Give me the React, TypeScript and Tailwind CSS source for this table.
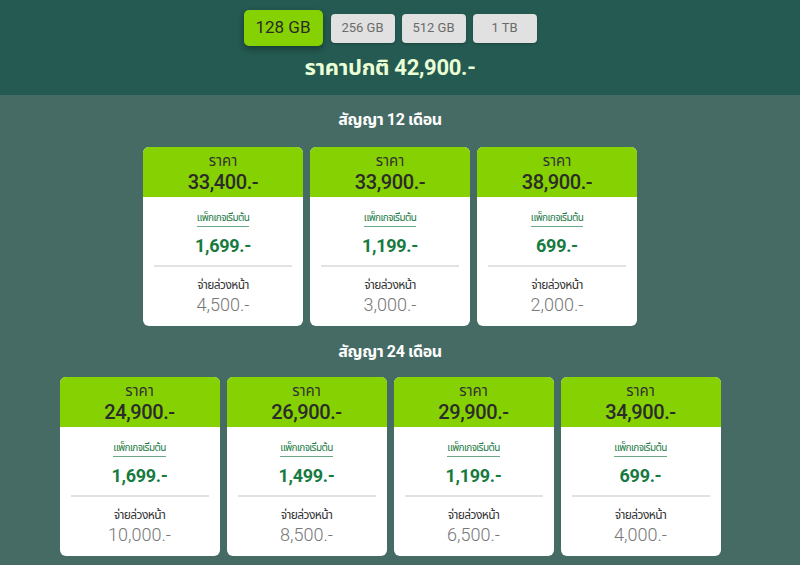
import React from 'react';

const font = { fontFamily: 'Roboto, "Noto Sans", "Noto Sans Thai", sans-serif' };

interface Plan {
  price: string;
  pack: string;
  down: string;
}

const plans12: Plan[] = [
  { price: '33,400.-', pack: '1,699.-', down: '4,500.-' },
  { price: '33,900.-', pack: '1,199.-', down: '3,000.-' },
  { price: '38,900.-', pack: '699.-', down: '2,000.-' },
];

const plans24: Plan[] = [
  { price: '24,900.-', pack: '1,699.-', down: '10,000.-' },
  { price: '26,900.-', pack: '1,499.-', down: '8,500.-' },
  { price: '29,900.-', pack: '1,199.-', down: '6,500.-' },
  { price: '34,900.-', pack: '699.-', down: '4,000.-' },
];

function PlanCard({ plan }: { plan: Plan }) {
  return (
    <div className="w-[160px] h-[179px] rounded-[6px] overflow-hidden bg-white flex flex-col">
      {/* Header */}
      <div className="h-[50px] bg-[#86d102] flex flex-col items-center pt-[6px]">
        <span className="text-[15px] leading-[17px] text-[#333]">ราคา</span>
        <span className="text-[20px] leading-[24px] font-medium tracking-[-0.4px] text-[#2b2b2b]">{plan.price}</span>
      </div>
      {/* Body */}
      <div className="flex-1 flex flex-col items-center pt-[14px]">
        <span className="text-[10px] leading-[14px] tracking-[-0.6px] text-[#1d7a45] border-b border-[#6aa886] pb-[1px]">
          แพ็กเกจเริ่มต้น
        </span>
        <span className="mt-[7px] text-[18px] leading-[24px] font-bold tracking-[-0.3px] text-[#177a3f]">{plan.pack}</span>
        <div className="mt-[7px] w-[138px] h-[2px] bg-[#e2e2e2]" />
        <span className="mt-[10px] text-[12px] leading-[17px] tracking-[-0.6px] text-[#333]">จ่ายล่วงหน้า</span>
        <span className="text-[18px] leading-[22px] font-light text-[#777]">{plan.down}</span>
      </div>
    </div>
  );
}

export default function App() {
  const sizes = ['256 GB', '512 GB', '1 TB'];

  return (
    <div className="w-[800px] h-[565px] overflow-hidden bg-[#466b64]" style={font}>
      {/* Top band */}
      <div className="h-[95px] bg-[#245a51]">
        <div className="w-[780px] flex flex-col items-center pt-[10px]">
          <div className="flex items-center">
            <button className="w-[79px] h-[36px] rounded-[5px] bg-[#86d102] text-[17px] text-[#2a2a2a] shadow-[0_3px_6px_rgba(0,0,0,0.35)]">
              128 GB
            </button>
            <div className="flex gap-[7px] ml-[8px]">
              {sizes.map((s) => (
                <button
                  key={s}
                  className="w-[64px] h-[29px] rounded-[4px] bg-[#e1e1e1] text-[13px] text-[#6b6b6b] shadow-[0_1px_2px_rgba(0,0,0,0.25)]"
                >
                  {s}
                </button>
              ))}
            </div>
          </div>
          <div className="mt-[8px] text-[22px] leading-[28px] font-bold tracking-[-0.3px] text-[#eaffd6]">ราคาปกติ 42,900.-</div>
        </div>
      </div>

      {/* Plans */}
      <div className="w-[780px] flex flex-col items-center">
        <div className="mt-[14px] text-[16px] leading-[22px] font-bold tracking-[-0.4px] text-white">สัญญา 12 เดือน</div>
        <div className="mt-[16px] flex gap-[7px]">
          {plans12.map((p) => (
            <PlanCard key={p.price} plan={p} />
          ))}
        </div>
        <div className="mt-[15px] text-[16px] leading-[22px] font-bold tracking-[-0.4px] text-white">สัญญา 24 เดือน</div>
        <div className="mt-[14px] flex gap-[7px]">
          {plans24.map((p) => (
            <PlanCard key={p.price} plan={p} />
          ))}
        </div>
      </div>
    </div>
  );
}
